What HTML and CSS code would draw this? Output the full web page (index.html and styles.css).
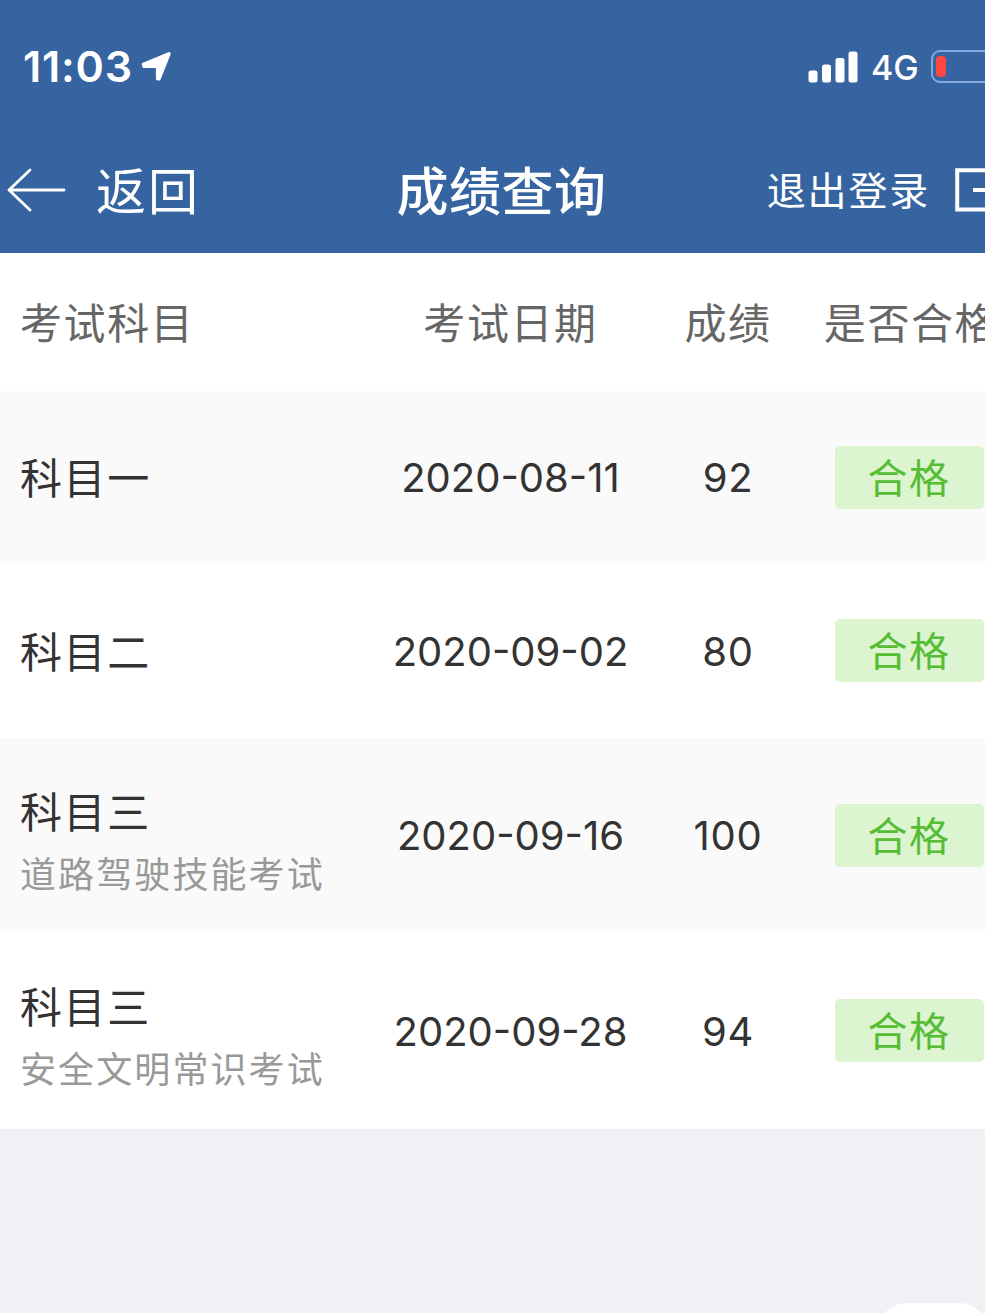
FILE: index.html
```html
<!DOCTYPE html>
<html lang="zh-CN">
<head>
  <title>成绩查询</title>
  <meta charset="UTF-8">
  <link rel="stylesheet" href="styles.css">
</head>
<body>
  <div class="page">
    <header class="top">
      <div class="status-bar">
        <span class="time">11:03</span>
        <svg class="location" width="30" height="30" viewBox="0 0 30 30">
          <path d="M2.5 12.4 L28 1.8 L18 26.8 H16.6 V15 L15.4 14.4 H3z" fill="#fff" stroke="#fff" stroke-width="3.4" stroke-linejoin="round"/>
        </svg>
        <svg class="signal" width="50" height="32" viewBox="0 0 50 32" fill="#fff">
          <rect x="0.5" y="19.5" width="9" height="12" rx="2.5"/>
          <rect x="14" y="13.5" width="9" height="18" rx="2.5"/>
          <rect x="27.5" y="7" width="9" height="24.5" rx="2.5"/>
          <rect x="40.5" y="0.5" width="9" height="31" rx="2.5"/>
        </svg>
        <span class="network">4G</span>
        <span class="battery"><span class="level"></span></span>
      </div>
      <nav class="nav-bar">
        <a class="back">
          <svg width="60" height="44" viewBox="0 0 60 44" fill="none" stroke="#fff" stroke-width="2.8" stroke-linecap="round" stroke-linejoin="round">
            <path d="M23 2 L2 22 L23 42 M2 22 H57"/>
          </svg>
          <span>返回</span>
        </a>
        <h1>成绩查询</h1>
        <a class="logout">
          <span>退出登录</span>
          <svg width="48" height="44" viewBox="0 0 48 44" fill="none" stroke="#fff" stroke-width="4">
            <path d="M34 12 V2.2 H2.2 V41.6 H34 V32 M18 22 H46 M38 14 L46 22 L38 30"/>
          </svg>
        </a>
      </nav>
    </header>

    <table class="scores">
      <thead>
        <tr>
          <th class="subject">考试科目</th>
          <th class="date">考试日期</th>
          <th class="score">成绩</th>
          <th class="result">是否合格</th>
        </tr>
      </thead>
      <tbody>
        <tr class="row-first">
          <td class="subject">科目一</td>
          <td class="number date">2020-08-11</td>
          <td class="number">92</td>
          <td><span class="badge">合格</span></td>
        </tr>
        <tr class="row-second">
          <td class="subject">科目二</td>
          <td class="number date">2020-09-02</td>
          <td class="number">80</td>
          <td><span class="badge">合格</span></td>
        </tr>
        <tr class="row-third">
          <td class="subject detailed">科目三<small>道路驾驶技能考试</small></td>
          <td class="number date">2020-09-16</td>
          <td class="number">100</td>
          <td><span class="badge">合格</span></td>
        </tr>
        <tr class="row-fourth">
          <td class="subject detailed">科目三<small>安全文明常识考试</small></td>
          <td class="number date">2020-09-28</td>
          <td class="number">94</td>
          <td><span class="badge">合格</span></td>
        </tr>
      </tbody>
    </table>

    <div class="float-button"></div>
  </div>
</body>
</html>
```

FILE: styles.css
```css
body {
  margin: 0;
  background: #f0f0f5;
  font-family: Inter, "Noto Sans CJK SC", sans-serif;
}
.page {
  position: relative;
  width: 985px;
  height: 1313px;
  overflow: hidden;
}
.top {
  width: 1003px;
  height: 253px;
  background: #3664a1;
  color: #fff;
}
.status-bar {
  display: flex;
  align-items: center;
  box-sizing: border-box;
  height: 130px;
  padding: 3px 0 0 23px;
}
.time {
  width: 118px;
  padding-bottom: 2px;
  font-size: 43px;
  font-weight: 600;
  letter-spacing: 0.8px;
}
.signal {
  margin-left: 637px;
}
.network {
  width: 60px;
  margin-left: 13px;
  padding-top: 2px;
  font-size: 34px;
  font-weight: 500;
}
.battery {
  flex: none;
  box-sizing: border-box;
  width: 66px;
  height: 33px;
  padding: 4px 3px;
  border: 2.5px solid #86a8dc;
  border-radius: 9px;
}
.level {
  display: block;
  width: 10px;
  height: 21px;
  border-radius: 4px;
  background: #ff4740;
}
.nav-bar {
  display: grid;
  grid-template-columns: 1fr auto 1fr;
  align-items: center;
  height: 120px;
}
.nav-bar span, .nav-bar h1 {
  padding-bottom: 4px;
}
.back {
  display: flex;
  align-items: center;
  gap: 29px;
  padding-left: 7px;
  font-size: 50px;
  letter-spacing: 2px;
}
.nav-bar h1 {
  margin: 0;
  font-size: 52px;
  font-weight: 500;
  letter-spacing: 0.5px;
}
.logout {
  display: flex;
  align-items: center;
  justify-content: flex-end;
  gap: 25px;
  font-size: 39px;
  letter-spacing: 1.8px;
  white-space: nowrap;
}
.scores {
  width: 1010px;
  table-layout: fixed;
  border-collapse: collapse;
  background: #fff;
  color: #333;
  font-size: 42px;
  letter-spacing: 1.6px;
  white-space: nowrap;
}
.scores th, .scores td {
  padding: 0;
  text-align: center;
  font-weight: normal;
}
.scores th {
  padding-bottom: 4px;
}
.scores .subject {
  width: 353px;
  padding-left: 20px;
  text-align: left;
}
.scores td.subject {
  padding-bottom: 3px;
}
.scores td.detailed {
  padding-top: 6px;
  padding-bottom: 0;
}
.scores .date {
  width: 275px;
}
.scores .score {
  width: 160px;
}
.scores .result {
  padding-left: 4px;
}
.scores thead tr {
  height: 138px;
  color: #666;
}
.scores tbody tr:nth-child(odd) {
  background: #fafafa;
}
.scores .row-first {
  height: 172px;
}
.scores .row-second {
  height: 175px;
}
.scores .row-third {
  height: 194px;
}
.scores .row-fourth {
  height: 197px;
}
.scores .number {
  padding-top: 1px;
  font-size: 40px;
  letter-spacing: 0.7px;
}
.scores .number.date {
  letter-spacing: 0;
}
small {
  display: block;
  margin-top: 6px;
  color: #999;
  font-size: 36px;
  letter-spacing: 2.1px;
}
.badge {
  display: block;
  width: 149px;
  margin: 0 auto;
  padding-top: 2px;
  border-radius: 5px;
  background: #dcf4cf;
  color: #55bd34;
  font-size: 40px;
  line-height: 61px;
}
.float-button {
  position: absolute;
  left: 877px;
  top: 1303px;
  width: 112px;
  height: 60px;
  border-radius: 30px;
  background: #fff;
}
```
